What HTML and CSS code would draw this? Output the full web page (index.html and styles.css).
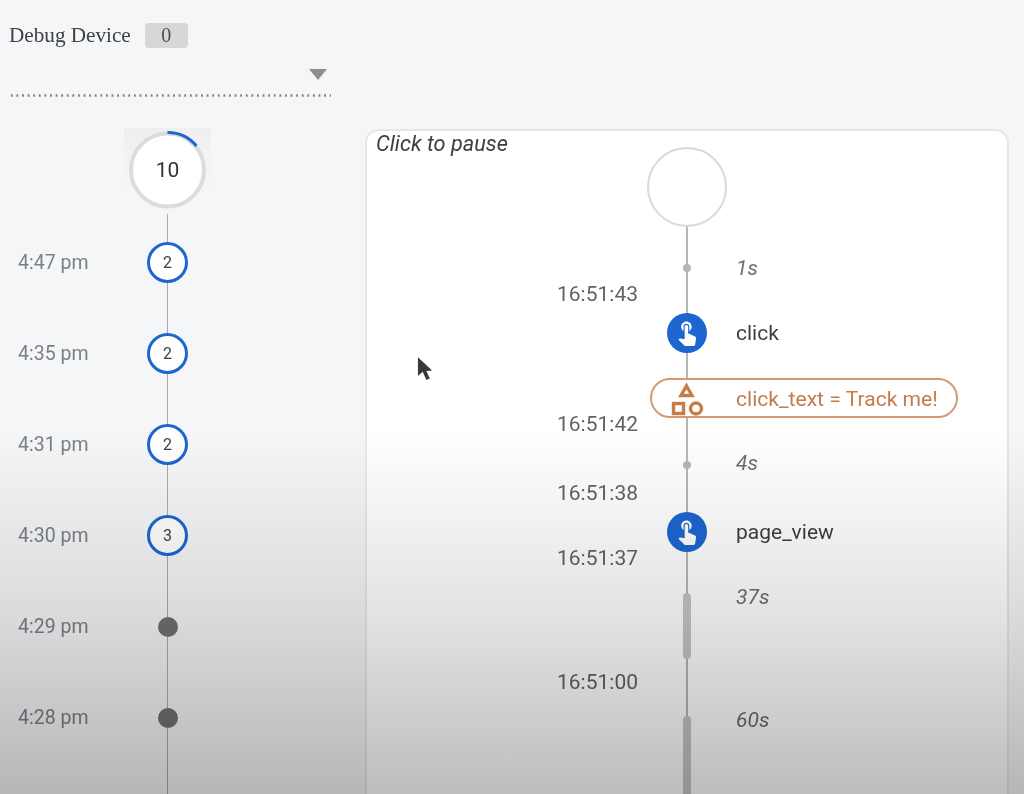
FILE: index.html
```html
<!DOCTYPE html>
<html lang="en">
<head>
<meta charset="utf-8">
<title>Debug View</title>
<link rel="stylesheet" href="styles.css">
</head>
<body>
<div class="page">
  <aside class="sidebar">
    <div class="device-row">
      <span class="device-label">Debug Device</span>
      <span class="device-count">0</span>
    </div>
    <div class="device-select"><span class="select-arrow"></span></div>
    <div class="hero">
      <svg class="hero-ring" viewBox="0 0 87 86" aria-hidden="true">
        <circle class="ring-track" cx="43.5" cy="42" r="36.5"/>
        <path class="ring-arc" d="M43.5 4.5 A37.5 37.5 0 0 1 72.5 18"/>
      </svg>
      <span class="hero-count">10</span>
    </div>
    <div class="history">
      <div class="history-row"><span class="history-time">4:47 pm</span><span class="count-node">2</span></div>
      <div class="history-row"><span class="history-time">4:35 pm</span><span class="count-node">2</span></div>
      <div class="history-row"><span class="history-time">4:31 pm</span><span class="count-node">2</span></div>
      <div class="history-row"><span class="history-time">4:30 pm</span><span class="count-node">3</span></div>
      <div class="history-row"><span class="history-time">4:29 pm</span><span class="dot-slot"><span class="dot-node"></span></span></div>
      <div class="history-row"><span class="history-time">4:28 pm</span><span class="dot-slot"><span class="dot-node"></span></span></div>
    </div>
  </aside>

  <main class="panel">
    <div class="panel-left">
      <div class="panel-title">Click to pause</div>
      <div class="times">
        <span>16:51:43</span>
        <span>16:51:42</span>
        <span>16:51:38</span>
        <span>16:51:37</span>
        <span>16:51:00</span>
      </div>
    </div>
    <div class="events">
      <div class="start-circle"></div>
      <div class="event">
        <span class="node-slot"><span class="tick"></span></span>
        <span class="gap-label">1s</span>
      </div>
      <div class="event">
        <span class="event-icon">
          <svg viewBox="0 0 24 24" aria-hidden="true"><path d="M9 11.24V7.5C9 6.12 10.12 5 11.5 5S14 6.12 14 7.5v3.74c1.21-.81 2-2.18 2-3.74C16 5.01 13.99 3 11.5 3S7 5.01 7 7.5c0 1.56.79 2.93 2 3.74zm9.84 4.63l-4.54-2.26c-.17-.07-.35-.11-.54-.11H13v-6c0-.83-.67-1.5-1.5-1.5S10 6.67 10 7.5v10.74l-3.43-.72c-.08-.01-.15-.03-.24-.03-.31 0-.59.13-.79.33l-.79.8 4.94 4.94c.27.27.65.44 1.06.44h6.79c.75 0 1.33-.55 1.44-1.28l.75-5.27c.01-.07.02-.14.02-.2 0-.62-.38-1.16-.91-1.38z"/></svg>
        </span>
        <span class="event-label">click</span>
      </div>
      <div class="param-pill">
        <svg class="param-icon" viewBox="0 0 40 40" aria-hidden="true">
          <path d="M19.5 8 L25 17.5 H14 Z"/>
          <rect x="6.5" y="25.5" width="10" height="10"/>
          <circle cx="29" cy="30.5" r="5.5"/>
        </svg>
        <span class="param-label">click_text = Track me!</span>
      </div>
      <div class="event">
        <span class="node-slot tick-low"><span class="tick"></span></span>
        <span class="gap-label">4s</span>
      </div>
      <div class="event">
        <span class="event-icon">
          <svg viewBox="0 0 24 24" aria-hidden="true"><path d="M9 11.24V7.5C9 6.12 10.12 5 11.5 5S14 6.12 14 7.5v3.74c1.21-.81 2-2.18 2-3.74C16 5.01 13.99 3 11.5 3S7 5.01 7 7.5c0 1.56.79 2.93 2 3.74zm9.84 4.63l-4.54-2.26c-.17-.07-.35-.11-.54-.11H13v-6c0-.83-.67-1.5-1.5-1.5S10 6.67 10 7.5v10.74l-3.43-.72c-.08-.01-.15-.03-.24-.03-.31 0-.59.13-.79.33l-.79.8 4.94 4.94c.27.27.65.44 1.06.44h6.79c.75 0 1.33-.55 1.44-1.28l.75-5.27c.01-.07.02-.14.02-.2 0-.62-.38-1.16-.91-1.38z"/></svg>
        </span>
        <span class="event-label">page_view</span>
      </div>
      <div class="event span-event">
        <span class="bar-slot"><span class="bar"></span></span>
        <span class="gap-label raised">37s</span>
      </div>
      <div class="event span-event">
        <span class="bar-slot"><span class="bar bar-long"></span></span>
        <span class="gap-label raised">60s</span>
      </div>
    </div>
  </main>
</div>
<svg class="cursor" viewBox="0 0 18 28" aria-hidden="true"><path d="M1 1 L1 21 L6 16.5 L10 25 L13.5 23.5 L10 15.5 L16 15 Z"/></svg>
<div class="shade"></div>
</body>
</html>
```
FILE: styles.css
```css
* { box-sizing: border-box; }
html, body { margin: 0; height: 794px; overflow: hidden; }
body {
  position: relative;
  background: #f5f6f8;
  font-family: Roboto, "Liberation Sans", sans-serif;
  color: #3c4043;
}
.page { display: flex; height: 794px; filter: blur(.45px); }

/* sidebar */
.sidebar { width: 332px; padding: 23px 0 0 9px; flex: none; }
.device-row { display: flex; align-items: center; gap: 14px; height: 25px; }
.device-label {
  font-family: "Liberation Serif", serif;
  font-size: 21.2px;
  color: #3f4245;
  white-space: nowrap;
}
.device-count {
  width: 43px; height: 25px;
  border-radius: 4px;
  background: #d6d7d8;
  text-align: center;
  font-family: "Liberation Serif", serif;
  font-size: 20px;
  line-height: 25px;
  color: #4a4c4e;
}
.device-select {
  height: 49px;
  display: flex;
  justify-content: flex-end;
  align-items: flex-start;
  padding: 21px 4px 0 0;
  background-image: radial-gradient(circle, #7f8183 1px, transparent 1.4px);
  background-size: 5.6px 3px;
  background-repeat: repeat-x;
  background-position: 0 bottom;
  width: 322px;
}
.select-arrow {
  width: 0; height: 0;
  border-left: 9px solid transparent;
  border-right: 9px solid transparent;
  border-top: 11px solid #8c8e90;
}
.hero {
  position: relative;
  margin: 31px 0 0 115px;
  width: 87px; height: 86px;
  background: linear-gradient(to bottom, #eeeff0, #f5f6f8 75%);
  display: flex; align-items: center; justify-content: center;
}
.hero-ring { position: absolute; inset: 0; width: 87px; height: 86px; }
.ring-track { fill: #fff; stroke: #dcdcdc; stroke-width: 4; }
.ring-arc { fill: none; stroke: #1d66d0; stroke-width: 3; }
.hero-count { position: relative; font-size: 21px; color: #333; margin-top: -2px; }

.history { position: relative; padding: 3px 0 0 9px; height: 580px; overflow: hidden; }
.history::before {
  content: "";
  position: absolute;
  left: 157.5px; top: 0; bottom: 0;
  width: 1.5px;
  background: #a9abad;
}
.history-row {
  position: relative;
  display: grid;
  grid-template-columns: 129px 41px;
  align-items: center;
  height: 91px;
}
.history-time { font-size: 19.5px; color: #7d8083; line-height: 20px; }
.count-node {
  width: 41px; height: 41px;
  border-radius: 50%;
  border: 3px solid #1d66d0;
  background: #fff;
  display: flex; align-items: center; justify-content: center;
  font-size: 16px; color: #3c4043;
}
.dot-slot { display: flex; justify-content: center; }
.dot-node { width: 20px; height: 20px; border-radius: 50%; background: #707173; }

/* panel */
.panel {
  margin: 129px 0 0 33px;
  width: 644px; height: 665px;
  flex: none;
  background: #fff;
  border: 2px solid #e6e7e8;
  border-bottom: 0;
  border-radius: 14px 14px 0 0;
  padding: 0 0 0 9px;
  display: flex;
  gap: 29px;
  overflow: hidden;
}
.panel-left { width: 262px; flex: none; padding-top: 3px; }
.panel-title { font-size: 21.7px; font-style: italic; line-height: 20px; color: #3c4043; white-space: nowrap; }
.times {
  margin-top: 130px;
  display: grid;
  grid-template-rows: 130px 69px 65px 124px 20px;
  justify-items: end;
  font-size: 21px;
  line-height: 20px;
  color: #5f6368;
}
.events {
  position: relative;
  padding-top: 16px;
  flex: 1;
  display: grid;
  grid-template-rows: 101px 65px 65px 65px 69px 81px 123px 78px;
  align-content: start;
}
.events::before {
  content: "";
  position: absolute;
  left: 19px; top: 60px; bottom: 0;
  width: 2px;
  background: #b4b6b8;
}
.start-circle {
  position: relative;
  width: 80px; height: 80px;
  margin-left: -20px;
  border-radius: 50%;
  border: 2px solid #d9dadb;
  background: #fff;
}
.event {
  position: relative;
  display: grid;
  grid-template-columns: 40px 1fr;
  column-gap: 29px;
  align-items: center;
  height: 40px;
}
.span-event { align-items: start; height: auto; }
.node-slot { display: flex; justify-content: center; align-items: center; height: 40px; }
.tick { width: 8px; height: 8px; border-radius: 50%; background: #b4b6b8; }
.tick-low { padding-top: 4px; }
.bar-slot { display: flex; justify-content: center; }
.bar { width: 8px; height: 66px; border-radius: 4px; background: #c4c5c6; }
.bar-long { height: 78px; border-radius: 4px 4px 0 0; }
.gap-label { font-size: 21px; font-style: italic; line-height: 20px; color: #6b6e72; }
.raised { margin-top: -6px; }
.event-icon {
  width: 40px; height: 40px;
  border-radius: 50%;
  background: #1d66d0;
  display: flex; align-items: center; justify-content: center;
}
.event-icon svg { width: 28px; height: 28px; fill: #fff; margin-top: -3px; }
.event-label { font-size: 21px; color: #3c4043; margin-top: 0; }
.param-pill {
  position: relative;
  margin-left: -17px;
  width: 308px; height: 40px;
  border: 2px solid #d59a74;
  border-radius: 20px;
  background: #fff;
  display: flex;
  align-items: center;
  gap: 29px;
  padding-left: 15px;
}
.param-icon { width: 40px; height: 40px; flex: none; fill: none; stroke: #c97b45; stroke-width: 3.4; }
.param-label { font-size: 21.1px; color: #c47c4b; white-space: nowrap; }

/* overlays */
.cursor {
  position: absolute;
  left: 417px; top: 356px;
  width: 17px; height: 27px;
  fill: #3a3a3a;
}
.shade {
  position: absolute;
  inset: 0;
  pointer-events: none;
  background: linear-gradient(to bottom, rgba(0,0,0,0) 430px, rgba(0,0,0,.11) 612px, rgba(0,0,0,.26) 794px);
}
```
